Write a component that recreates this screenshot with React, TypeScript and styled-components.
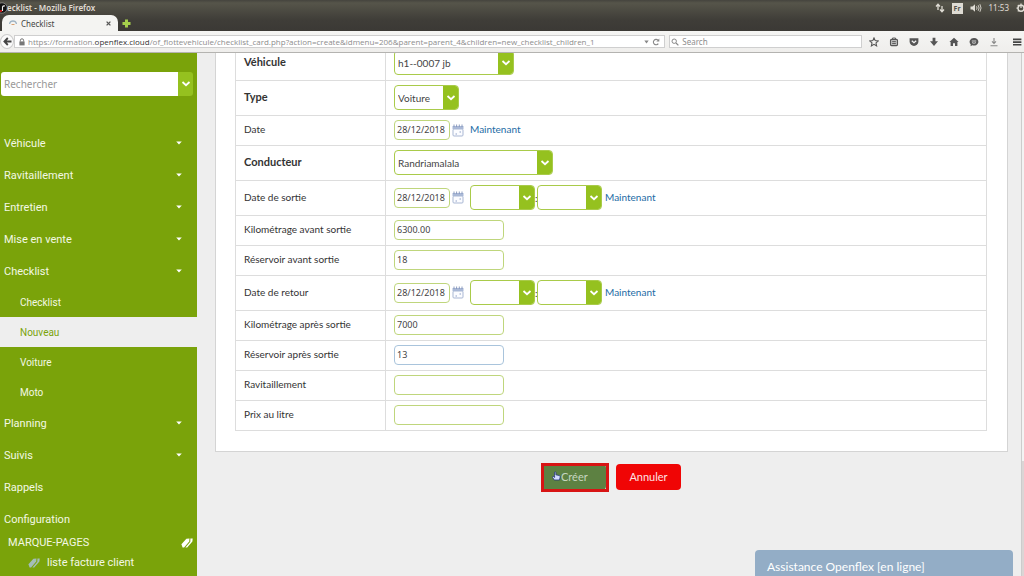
import React from "react";
import styled, { createGlobalStyle } from "styled-components";

const uiFont = `"Noto Sans", "Open Sans", sans-serif`;
const formFont = `Lato, "Open Sans", sans-serif`;
const menuFont = `Roboto, "Liberation Sans", sans-serif`;

const GlobalStyle = createGlobalStyle`
  *, *::before, *::after { box-sizing: border-box; }
  body { margin: 0; background: #eee; }
  button, input, select { font: inherit; color: inherit; margin: 0; }
`;

const Page = styled.div`
  display: flex;
  flex-direction: column;
  height: 100vh;
  overflow: hidden;
  font-family: ${formFont};
  font-size: 11px;
  color: #333;
`;

/* Window chrome */
const Chrome = styled.header`
  flex: none;
  background: linear-gradient(#45443e 0, #56554a 3px, #3f3d38 20px, #3b3935 31px);
  font-family: ${uiFont};
`;
const TitleBar = styled.div`
  display: flex;
  align-items: center;
  justify-content: space-between;
  height: 15px;
  padding-top: 1px;
  color: #e0ddd5;
  font-size: 8px;
  line-height: 12px;
`;
const WindowTitle = styled.div`
  display: flex;
  align-items: center;
  font-weight: 600;
  svg { margin-right: -1px; }
`;
const Tray = styled.div`
  display: flex;
  align-items: center;
  gap: 7px;
`;
const Keyboard = styled.span`
  width: 11px;
  background: #dedbd3;
  color: #55524c;
  font-size: 7px;
  line-height: 11px;
  font-weight: 700;
  text-align: center;
`;
const TabStrip = styled.div`
  display: flex;
  align-items: center;
  gap: 4px;
  height: 16px;
  padding-left: 2px;
`;
const Tab = styled.div`
  display: flex;
  align-items: center;
  width: 116px;
  height: 16px;
  padding: 0 7px;
  gap: 4px;
  border-radius: 7px 7px 0 0;
  background: #f4f4f2;
  color: #444;
  font-size: 8px;
`;
const TabName = styled.span`
  flex: 1;
`;
const IconButton = styled.button`
  display: flex;
  align-items: center;
  justify-content: center;
  padding: 0;
  border: 0;
  background: none;
  cursor: pointer;
`;
const Toolbar = styled.div`
  display: flex;
  align-items: center;
  height: 22px;
  border-bottom: 1px solid #b4b3b0;
  background: linear-gradient(#f5f5f3, #efeeec);
  color: #8d8d8d;
  font-size: 8px;
`;
const BackButton = styled(IconButton)`
  width: 14px;
  height: 15px;
  border: 1px solid #ccc;
  border-radius: 50%;
  background: #fbfbfb;
`;
const Field = styled.div<{ $grow: number }>`
  display: flex;
  align-items: center;
  flex: ${(p) => p.$grow} 1 0;
  min-width: 0;
  height: 13px;
  padding: 0 4px;
  gap: 3px;
  border: 1px solid #cfcfcf;
  background: #fff;
  & + & { margin-left: 4px; padding-left: 1px; }
`;
const Address = styled.div`
  flex: 1;
  min-width: 0;
  overflow: hidden;
  white-space: nowrap;
  font-family: "Open Sans", "Noto Sans", sans-serif;
  line-height: 11px;
  b { color: #333; font-weight: 500; }
`;
const SearchInput = styled.input`
  flex: 1;
  min-width: 0;
  padding: 0;
  border: 0;
  outline: 0;
  background: none;
  line-height: 11px;
  &::placeholder { color: #8d8d8d; opacity: 1; }
`;
const Tools = styled.div`
  display: flex;
  align-items: center;
  gap: 10px;
  padding: 0 2px 0 7px;
  button:last-child { margin-left: 3px; }
`;

/* Page body */
const Body = styled.div`
  display: flex;
  flex: 1;
  min-height: 0;
`;
const Sidebar = styled.aside`
  flex: none;
  display: flex;
  flex-direction: column;
  width: 197px;
  padding-top: 19px;
  background: #7aa30a;
  color: #f3f8e4;
  font-family: ${menuFont};
  font-size: 11px;
`;
const SideSearch = styled.form`
  display: flex;
  flex: none;
  height: 24px;
  margin: 0 4px 31px 1px;
`;
const SideInput = styled.input`
  flex: 1;
  min-width: 0;
  padding: 0 3px;
  border: 0;
  border-radius: 3px 0 0 3px;
  outline: 0;
  background: #fff;
  font-family: ${uiFont};
  font-size: 10px;
  &::placeholder { color: #999; opacity: 1; }
`;
const SideSearchButton = styled(IconButton)`
  width: 15px;
  border-radius: 0 3px 3px 0;
  background: #95c11f;
`;
const Menu = styled.nav`
  display: flex;
  flex-direction: column;
`;
const MenuItem = styled.a`
  display: flex;
  align-items: center;
  justify-content: space-between;
  height: 32px;
  padding: 0 15px 0 4px;
  color: inherit;
  text-decoration: none;
`;
const SubItem = styled.a<{ $active?: boolean }>`
  display: flex;
  align-items: center;
  height: 30px;
  padding-left: 20px;
  background: ${(p) => (p.$active ? "#eee" : "transparent")};
  color: ${(p) => (p.$active ? "#7aa30a" : "inherit")};
  font-size: 10px;
  text-decoration: none;
`;
const Bookmarks = styled.section`
  display: flex;
  flex-direction: column;
  margin-top: -2px;
  line-height: 20px;
  header {
    display: flex;
    align-items: center;
    justify-content: space-between;
    padding: 0 4px 0 8px;
  }
  a {
    display: flex;
    align-items: center;
    gap: 7px;
    padding-left: 28px;
    color: inherit;
    text-decoration: none;
  }
`;
const Main = styled.main`
  flex: 1;
  min-width: 0;
  overflow: hidden;
  background: #eee;
`;
const Card = styled.section`
  margin: -20px 13px 0 18px;
  padding: 12px 20px 20px 19px;
  border: 1px solid #d4d4d4;
  border-top: 0;
  background: #fff;
`;
const FormTable = styled.table`
  width: 100%;
  border-collapse: collapse;
  border: 1px solid #ddd;
`;
const Row = styled.tr<{ $tall?: boolean }>`
  height: ${(p) => (p.$tall ? 35 : 30)}px;
  border-bottom: 1px solid #ddd;
`;
const LabelCell = styled.th<{ $strong?: boolean }>`
  width: 150px;
  padding: 0 8px 3px;
  border-right: 1px solid #ddd;
  font-size: ${(p) => (p.$strong ? 11 : 10)}px;
  font-weight: ${(p) => (p.$strong ? 700 : 400)};
  text-align: left;
`;
const ValueCell = styled.td`
  padding: 0 8px 1px;
`;
const Inline = styled.div`
  display: flex;
  align-items: center;
`;
const TextInput = styled.input<{ $short?: boolean; $focused?: boolean }>`
  display: block;
  width: ${(p) => (p.$short ? 56 : 110)}px;
  height: 20px;
  padding: 0 2px 1px;
  border: 1px solid ${(p) => (p.$focused ? "#a9c4dc" : "#bfd67c")};
  border-radius: 4px;
  outline: 0;
  background: #fff;
  color: #444;
  font-family: ${uiFont};
  font-size: 9px;
`;
const SelectBox = styled.span<{ $width: number }>`
  display: grid;
  grid-template-columns: 1fr 15px;
  width: ${(p) => p.$width}px;
  height: 25px;
  overflow: hidden;
  border: 1px solid #a9cb4a;
  border-radius: 4px;
  background: #fff;
  select {
    grid-area: 1 / 1 / 2 / 3;
    min-width: 0;
    padding: 0 16px 0 3px;
    border: 0;
    outline: 0;
    appearance: none;
    background: none;
    color: #444;
    font-size: 10px;
  }
  span {
    grid-area: 1 / 2;
    display: flex;
    align-items: center;
    justify-content: center;
    background: #95c11f;
    pointer-events: none;
  }
`;
const CalendarButton = styled(IconButton)`
  margin: 0 6px 0 2px;
`;
const NowLink = styled.a`
  padding-bottom: 2px;
  color: #1d6ca5;
  font-size: 10px;
  text-decoration: none;
`;
const Colon = styled.span`
  width: 2px;
  font-size: 10px;
`;
const TimeNow = styled(NowLink)`
  margin-left: 3px;
`;
const Actions = styled.div`
  display: flex;
  justify-content: center;
  gap: 10px;
  padding: 12px 0 0 4px;
`;
const Button = styled.button<{ $danger?: boolean }>`
  display: flex;
  align-items: center;
  justify-content: ${(p) => (p.$danger ? "center" : "flex-start")};
  width: 65px;
  height: 26px;
  padding: 0 ${(p) => (p.$danger ? 0 : 11)}px 2px;
  border: 0;
  border-radius: 4px;
  background: ${(p) => (p.$danger ? "#f00505" : "#5d8142")};
  color: ${(p) => (p.$danger ? "#fde4e4" : "#c6d6c0")};
  font-size: 11px;
`;
const Highlighted = styled.div`
  position: relative;
  &::after {
    content: "";
    position: absolute;
    inset: -1px -3px -2px 0;
    border: 3px solid #d81414;
    pointer-events: none;
  }
`;
const Scrollbar = styled.div`
  flex: none;
  width: 3px;
  border-left: 1px solid #ccc;
  background: linear-gradient(#f3f3f3 78%, #dbd5d5 78%);
`;
const Assistance = styled.button`
  position: fixed;
  right: 11px;
  bottom: 0;
  width: 258px;
  height: 26px;
  padding: 8px 12px 0;
  border: 0;
  border-radius: 4px 4px 0 0;
  background: #93adc6;
  color: #fff;
  font-size: 12px;
  line-height: 18px;
  text-align: left;
`;

const Chevron = () => (
  <svg width="10" height="8" viewBox="0 0 10 8" aria-hidden="true">
    <path d="M1.5 2 L5 5.2 L8.5 2" fill="none" stroke="#fff" strokeWidth="1.8" />
  </svg>
);
const Caret = () => (
  <svg width="6" height="4" viewBox="0 0 6 4" aria-hidden="true">
    <path d="M0.2 0.5 H5.8 L3 3.4 Z" fill="#fff" />
  </svg>
);
const CalendarIcon = () => (
  <svg width="12" height="13" viewBox="0 0 12 13" aria-hidden="true">
    <rect x="1" y="5" width="10" height="7" rx="1" fill="#fbfcff" stroke="#a9b7d3" />
    <path d="M0.5 2 H11.5 V5 H0.5 Z" fill="#a9b8d6" />
    <path d="M2 0.5 V3 M4.6 0.5 V3 M7.3 0.5 V3 M10 0.5 V3" stroke="#8193ba" strokeWidth="0.9" />
    <path d="M3.5 10 H5 M7.5 8 H9" stroke="#8fa1c6" />
  </svg>
);
const TagIcon = ({ color }: { color: string }) => (
  <svg width="12" height="10" viewBox="0 0 12 10" aria-hidden="true">
    <path d="M0.4 6.2 L5.4 0.8 L8.5 0.4 L8.2 3.5 L3.1 9.4 L1.6 9.4 Z" fill={color} />
    <path d="M9.4 0.5 L11.7 0.5 L11.4 3.5 L6.2 9.4 L4.4 9.4 L9.3 3.8 Z" fill={color} />
  </svg>
);
const HandIcon = () => (
  <svg width="9" height="10" viewBox="0 0 9 10" aria-hidden="true">
    <path
      d="M2.6 4.6 V1.2 Q3.2 0.4 3.9 1.2 V3.8 L7.4 4.6 Q8.4 5 8.2 6 L7.5 9 H2.2 L0.6 6.4 Q0.6 5.2 1.6 5.5 L2.6 6.4 Z"
      fill="#d3dcff"
      stroke="#25357a"
      strokeWidth="0.8"
    />
  </svg>
);

const toolIcons: { name: string; art: React.ReactNode }[] = [
  {
    name: "Bookmark",
    art: <path d="M5 0.9 L6.2 3.6 L9.2 3.9 L7 5.9 L7.6 8.9 L5 7.3 L2.4 8.9 L3 5.9 L0.8 3.9 L3.8 3.6 Z" fill="none" stroke="#555" strokeWidth="1.1" />,
  },
  {
    name: "Library",
    art: (
      <>
        <rect x="1.5" y="2.4" width="7" height="6.2" rx="1" fill="#bbb" stroke="#555" strokeWidth="1.1" />
        <path d="M3.5 2 V1 H6.5 V2 M3.2 4.6 H6.8 M3.2 6.5 H6.8" fill="none" stroke="#555" strokeWidth="0.9" />
      </>
    ),
  },
  {
    name: "Pocket",
    art: (
      <>
        <path d="M0.6 1.2 H9.4 V4.5 A4.4 4.4 0 0 1 0.6 4.5 Z" fill="#555" />
        <path d="M2.8 3.8 L5 5.8 L7.2 3.8" fill="none" stroke="#f3f3f3" strokeWidth="1.2" />
      </>
    ),
  },
  { name: "Downloads", art: <path d="M3.6 0.8 H6.4 V4.3 H9 L5 8.9 L1 4.3 H3.6 Z" fill="#555" /> },
  { name: "Home", art: <path d="M5 0.8 L9.6 5 H8.4 V9 H6 V6.2 H4 V9 H1.6 V5 H0.4 Z" fill="#555" /> },
  {
    name: "Chat",
    art: (
      <>
        <path d="M5 1 A4.3 3.8 0 1 1 3.4 8.3 L1.5 9.2 L1.8 7.4 A4.3 3.8 0 0 1 5 1 Z" fill="#555" />
        <path d="M2.8 4 H7.2 M3 5.6 Q5 7 7 5.6" fill="none" stroke="#eee" strokeWidth="0.8" />
      </>
    ),
  },
  { name: "Save", art: <path d="M5 1 V6.2 M3 4.4 L5 6.4 L7 4.4 M1.5 8.8 H8.5" fill="none" stroke="#888" strokeWidth="1.1" /> },
  { name: "Menu", art: <path d="M1 2.4 H9.4 M1 5.1 H9.4 M1 7.8 H9.4" fill="none" stroke="#444" strokeWidth="1.6" /> },
];

type SelectProps = { id: string; width: number; value?: string; label?: string };
const Select = ({ id, width, value = "", label }: SelectProps) => (
  <SelectBox $width={width}>
    <select id={id} defaultValue={value} aria-label={label}>
      <option>{value}</option>
    </select>
    <span>
      <Chevron />
    </span>
  </SelectBox>
);

const DateField = ({ id, time }: { id: string; time?: boolean }) => (
  <Inline>
    <TextInput id={id} $short defaultValue="28/12/2018" />
    <CalendarButton type="button" aria-label="Calendrier">
      <CalendarIcon />
    </CalendarButton>
    {time && (
      <>
        <Select id={id + "-h"} width={65} label="Heure" />
        <Colon>:</Colon>
        <Select id={id + "-m"} width={65} label="Minute" />
      </>
    )}
    {time ? <TimeNow href="#">Maintenant</TimeNow> : <NowLink href="#">Maintenant</NowLink>}
  </Inline>
);

type FormRow = { id: string; label: string; strong?: boolean; tall?: boolean; field: React.ReactNode };
const rows: FormRow[] = [
  { id: "vehicule", label: "Véhicule", strong: true, tall: true, field: <Select id="vehicule" width={120} value="h1--0007 jb" /> },
  { id: "type", label: "Type", strong: true, tall: true, field: <Select id="type" width={65} value="Voiture" /> },
  { id: "date", label: "Date", field: <DateField id="date" /> },
  { id: "conducteur", label: "Conducteur", strong: true, tall: true, field: <Select id="conducteur" width={159} value="Randriamalala" /> },
  { id: "sortie", label: "Date de sortie", tall: true, field: <DateField id="sortie" time /> },
  { id: "km-avant", label: "Kilométrage avant sortie", field: <TextInput id="km-avant" defaultValue="6300.00" /> },
  { id: "res-avant", label: "Réservoir avant sortie", field: <TextInput id="res-avant" defaultValue="18" /> },
  { id: "retour", label: "Date de retour", tall: true, field: <DateField id="retour" time /> },
  { id: "km-apres", label: "Kilométrage après sortie", field: <TextInput id="km-apres" defaultValue="7000" /> },
  { id: "res-apres", label: "Réservoir après sortie", field: <TextInput id="res-apres" $focused defaultValue="13" /> },
  { id: "ravitaillement", label: "Ravitaillement", field: <TextInput id="ravitaillement" /> },
  { id: "prix", label: "Prix au litre", field: <TextInput id="prix" /> },
];

const menuTop = ["Véhicule", "Ravitaillement", "Entretien", "Mise en vente", "Checklist"];
const subMenu = ["Checklist", "Nouveau", "Voiture", "Moto"];
const menuBottom = [
  { name: "Planning", open: true },
  { name: "Suivis", open: true },
  { name: "Rappels", open: false },
  { name: "Configuration", open: false },
];

export default function App() {
  return (
    <Page>
      <GlobalStyle />
      <Chrome>
        <TitleBar>
          <WindowTitle>
            <svg width="8" height="12" viewBox="0 0 8 12" aria-hidden="true">
              <circle cx="2" cy="6" r="5.2" fill="#111" stroke="#aaa" strokeWidth="0.6" />
              <path d="M2.5 9 V5 Q3 3.6 5 4" fill="none" stroke="#eee" strokeWidth="1.1" />
              <circle cx="1" cy="9" r="1.1" fill="#e01515" />
            </svg>
            <span>ecklist - Mozilla Firefox</span>
          </WindowTitle>
          <Tray>
            <svg width="10" height="10" viewBox="0 0 10 10" aria-hidden="true">
              <path d="M3 7 V1.5 M1 3.5 L3 1.3 L5 3.5 M7 3 V8.5 M5 6.5 L7 8.7 L9 6.5" fill="none" stroke="#e0ddd5" strokeWidth="1.3" />
            </svg>
            <Keyboard>Fr</Keyboard>
            <svg width="12" height="10" viewBox="0 0 12 10" aria-hidden="true">
              <path d="M0.5 3.5 H2.5 L5 1.3 V8.7 L2.5 6.5 H0.5 Z" fill="#e0ddd5" />
              <path d="M6.5 3.3 Q7.6 5 6.5 6.7 M8.2 2.2 Q10 5 8.2 7.8 M9.9 1.2 Q12.2 5 9.9 8.8" fill="none" stroke="#e0ddd5" strokeWidth="0.9" />
            </svg>
            <span>11:53</span>
            <svg width="8" height="10" viewBox="0 0 8 10" aria-hidden="true">
              <circle cx="5" cy="5.2" r="3" fill="none" stroke="#e0ddd5" strokeWidth="1.4" />
              <path d="M5 0.5 V5 M0.5 5.2 H2 M1.8 2 L3 3.2 M1.8 8.4 L3 7.2" stroke="#e0ddd5" strokeWidth="1.2" />
            </svg>
          </Tray>
        </TitleBar>
        <TabStrip>
          <Tab>
            <svg width="8" height="8" viewBox="0 0 8 8" aria-hidden="true">
              <path d="M0.5 5 Q1 2 4 2 Q7 2 7.5 5" fill="none" stroke="#9fb4c4" strokeWidth="1.3" />
              <path d="M2.5 5.5 H5.5" stroke="#d8a070" />
            </svg>
            <TabName>Checklist</TabName>
            <IconButton type="button" aria-label="Close tab">
              <svg width="5" height="5" viewBox="0 0 5 5">
                <path d="M0.6 0.6 L4.4 4.4 M4.4 0.6 L0.6 4.4" stroke="#555" strokeWidth="1.3" />
              </svg>
            </IconButton>
          </Tab>
          <IconButton type="button" aria-label="New tab">
            <svg width="9" height="9" viewBox="0 0 9 9">
              <path d="M4.5 0.5 V8.5 M0.5 4.5 H8.5" stroke="#a5cf4c" strokeWidth="3" />
            </svg>
          </IconButton>
        </TabStrip>
        <Toolbar>
          <BackButton type="button" aria-label="Back">
            <svg width="9" height="9" viewBox="0 0 9 9">
              <path d="M8.5 4.5 H2 M4.8 1 L1.4 4.5 L4.8 8" fill="none" stroke="#444" strokeWidth="1.8" />
            </svg>
          </BackButton>
          <Field $grow={656}>
            <svg width="6" height="8" viewBox="0 0 6 8" aria-hidden="true">
              <path d="M1.4 3.5 V2.2 Q1.4 0.8 3 0.8 Q4.6 0.8 4.6 2.2 V3.5" fill="none" stroke="#777" />
              <rect x="0.4" y="3.4" width="5.2" height="4" fill="#777" />
            </svg>
            <Address>
              https://formation.<b>openflex.cloud</b>
              /of_flottevehicule/checklist_card.php?action=create&amp;idmenu=206&amp;parent=parent_4&amp;children=new_checklist_children_1
            </Address>
            <svg width="5" height="4" viewBox="0 0 5 4" aria-hidden="true">
              <path d="M0.3 0.5 H4.7 L2.5 3.5 Z" fill="#888" />
            </svg>
            <svg width="8" height="8" viewBox="0 0 8 8" aria-hidden="true">
              <path d="M6.3 5.6 A2.7 2.7 0 1 1 6 2.2" fill="none" stroke="#888" strokeWidth="1.1" />
              <path d="M7.3 0.6 V3.6 H4.3 Z" fill="#888" />
            </svg>
          </Field>
          <Field $grow={190} as="label">
            <svg width="8" height="8" viewBox="0 0 8 8" aria-hidden="true">
              <circle cx="3.2" cy="3.2" r="2.2" fill="none" stroke="#888" />
              <path d="M5 5 L7.4 7.4" stroke="#888" strokeWidth="1.2" />
            </svg>
            <SearchInput placeholder="Search" aria-label="Search" />
          </Field>
          <Tools>
            {toolIcons.map((t) => (
              <IconButton key={t.name} type="button" aria-label={t.name}>
                <svg width="10" height="10" viewBox="0 0 10 10">
                  {t.art}
                </svg>
              </IconButton>
            ))}
          </Tools>
        </Toolbar>
      </Chrome>
      <Body>
        <Sidebar>
          <SideSearch>
            <SideInput placeholder="Rechercher" aria-label="Rechercher" />
            <SideSearchButton type="button" aria-label="Options de recherche">
              <Chevron />
            </SideSearchButton>
          </SideSearch>
          <Menu>
            {menuTop.map((name) => (
              <MenuItem key={name} href="#">
                {name}
                <Caret />
              </MenuItem>
            ))}
            {subMenu.map((name) => (
              <SubItem key={name} href="#" $active={name === "Nouveau"}>
                {name}
              </SubItem>
            ))}
            {menuBottom.map((item) => (
              <MenuItem key={item.name} href="#">
                {item.name}
                {item.open && <Caret />}
              </MenuItem>
            ))}
          </Menu>
          <Bookmarks>
            <header>
              MARQUE-PAGES
              <TagIcon color="#fff" />
            </header>
            <a href="#">
              <TagIcon color="#a3bdb8" />
              liste facture client
            </a>
          </Bookmarks>
        </Sidebar>
        <Main>
          <Card>
            <FormTable>
              <tbody>
                {rows.map((r) => (
                  <Row key={r.id} $tall={r.tall}>
                    <LabelCell scope="row" $strong={r.strong}>
                      <label htmlFor={r.id}>{r.label}</label>
                    </LabelCell>
                    <ValueCell>{r.field}</ValueCell>
                  </Row>
                ))}
              </tbody>
            </FormTable>
          </Card>
          <Actions>
            <Highlighted>
              <Button type="submit">
                <HandIcon />
                Créer
              </Button>
            </Highlighted>
            <Button type="button" $danger>
              Annuler
            </Button>
          </Actions>
        </Main>
        <Scrollbar />
      </Body>
      <Assistance type="button">Assistance Openflex [en ligne]</Assistance>
    </Page>
  );
}
